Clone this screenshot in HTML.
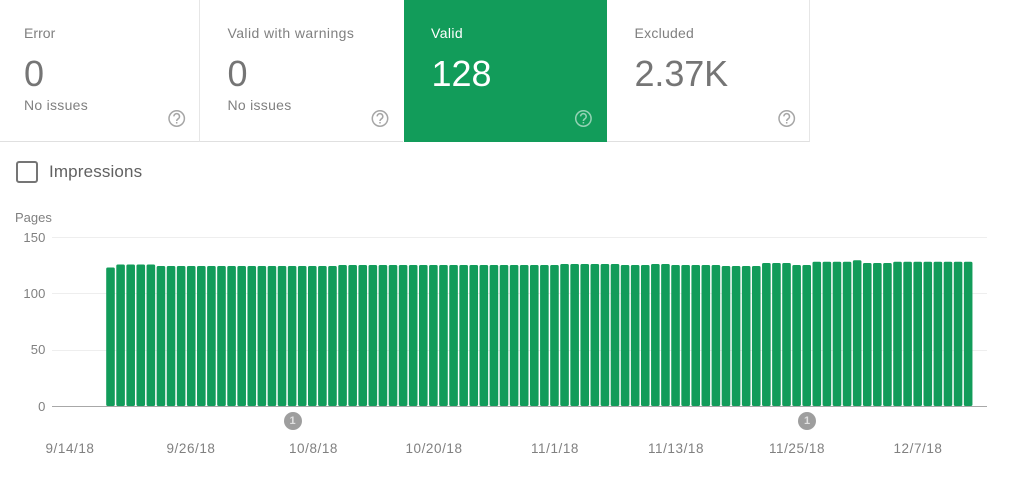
<!DOCTYPE html>
<html>
<head>
<meta charset="utf-8">
<style>
html,body{margin:0;padding:0;background:#fff}
body{width:1024px;height:482px;position:relative;overflow:hidden;font-family:"Liberation Sans",sans-serif;color:#757575}
.wrap{position:absolute;left:0;top:0;width:1024px;height:482px;filter:blur(.35px)}
.t{position:absolute;white-space:nowrap;line-height:1}
.card{position:absolute;top:0;height:141px;border-bottom:1px solid #e0e0e0;box-sizing:content-box}
.l{font-size:14px;color:#808080}
.n{font-size:36px;color:#757575}
.y{font-size:13px;color:#808080;width:30px;text-align:right;left:15.5px;letter-spacing:.15px}
.d{font-size:13.5px;color:#808080;width:80px;text-align:center;letter-spacing:.57px}
.g{position:absolute;left:52px;width:935px;height:1px;background:#eeeeee}
svg{position:absolute;overflow:visible}
.bars rect{width:8.6px;rx:1.5px;ry:1.5px;fill:#129c5a}
.bars .a{y:267.5px;height:138.5px}.bars .b{y:264.5px;height:141.5px}.bars .c{y:266px;height:140px}.bars .e{y:265px;height:141px}.bars .f{y:264px;height:142px}.bars .h{y:263px;height:143px}.bars .k{y:261.7px;height:144.3px}.bars .m{y:260.3px;height:145.7px}
</style>
</head>
<body>
<div class="wrap">
<div class="card" style="left:0;width:199px;border-right:1px solid #e6e6e6"></div>
<div class="card" style="left:200px;width:203px"></div>
<div class="card" style="left:403.5px;width:203.5px;height:142px;border:0;background:#129c5a"></div>
<div class="card" style="left:607px;width:202px;border-right:1px solid #e6e6e6"></div>

<div class="t l" style="left:24px;top:26px;letter-spacing:.05px">Error</div>
<div class="t n" style="left:24px;top:56px">0</div>
<div class="t l" style="left:24px;top:98px;letter-spacing:.28px">No issues</div>

<div class="t l" style="left:227.5px;top:26px;letter-spacing:.42px">Valid with warnings</div>
<div class="t n" style="left:227.5px;top:56px">0</div>
<div class="t l" style="left:227.5px;top:98px;letter-spacing:.28px">No issues</div>

<div class="t l" style="left:431px;top:26px;color:#fff;letter-spacing:.4px">Valid</div>
<div class="t n" style="left:431.5px;top:56px;color:#fff">128</div>

<div class="t l" style="left:634.5px;top:26px;letter-spacing:.25px">Excluded</div>
<div class="t n" style="left:634.5px;top:56px;letter-spacing:-.1px">2.37K</div>

<svg style="left:0;top:0" width="1024" height="150" fill="none" stroke-width="1.5">
<g stroke="#a6a6a6">
<circle cx="176.7" cy="118.5" r="7.7"/>
<path d="M173.9 116.4a2.8 2.8 0 1 1 4.4 2.3c-1 .7-1.6 1.1-1.6 2.3"/>
<path d="M176.7 122v1.5"/>
<circle cx="380" cy="118.5" r="7.7"/>
<path d="M377.2 116.4a2.8 2.8 0 1 1 4.4 2.3c-1 .7-1.6 1.1-1.6 2.3"/>
<path d="M380 122v1.5"/>
<circle cx="786.7" cy="118.5" r="7.7"/>
<path d="M783.9 116.4a2.8 2.8 0 1 1 4.4 2.3c-1 .7-1.6 1.1-1.6 2.3"/>
<path d="M786.7 122v1.5"/>
</g>
<g stroke="#fff" stroke-opacity=".55">
<circle cx="583.4" cy="118.5" r="7.7"/>
<path d="M580.6 116.4a2.8 2.8 0 1 1 4.4 2.3c-1 .7-1.6 1.1-1.6 2.3"/>
<path d="M583.4 122v1.5"/>
</g>
</svg>

<div style="position:absolute;left:16px;top:161px;width:18px;height:18px;border:2px solid #757575;border-radius:3px"></div>
<div class="t" style="left:49px;top:163px;font-size:17px;letter-spacing:.15px;color:#616161">Impressions</div>

<div class="t" style="left:15px;top:211px;font-size:13px;color:#808080">Pages</div>
<div class="t y" style="top:230.5px">150</div>
<div class="t y" style="top:286.5px">100</div>
<div class="t y" style="top:343px">50</div>
<div class="t y" style="top:399.5px">0</div>

<div class="g" style="top:237px"></div>
<div class="g" style="top:293px"></div>
<div class="g" style="top:349.5px"></div>

<svg class="bars" style="left:0;top:0" width="1024" height="482">
<rect class="a" x="106.2"/><rect class="b" x="116.29"/><rect class="b" x="126.38"/><rect class="b" x="136.47"/><rect class="b" x="146.56"/><rect class="c" x="156.65"/><rect class="c" x="166.74"/><rect class="c" x="176.83"/><rect class="c" x="186.92"/><rect class="c" x="197.01"/><rect class="c" x="207.1"/><rect class="c" x="217.19"/><rect class="c" x="227.28"/><rect class="c" x="237.37"/><rect class="c" x="247.46"/><rect class="c" x="257.55"/><rect class="c" x="267.64"/><rect class="c" x="277.73"/><rect class="c" x="287.82"/><rect class="c" x="297.91"/><rect class="c" x="308"/><rect class="c" x="318.09"/><rect class="c" x="328.18"/><rect class="e" x="338.27"/><rect class="e" x="348.36"/><rect class="e" x="358.45"/><rect class="e" x="368.54"/><rect class="e" x="378.63"/><rect class="e" x="388.72"/><rect class="e" x="398.81"/><rect class="e" x="408.9"/><rect class="e" x="418.99"/><rect class="e" x="429.08"/><rect class="e" x="439.17"/><rect class="e" x="449.26"/><rect class="e" x="459.35"/><rect class="e" x="469.44"/><rect class="e" x="479.53"/><rect class="e" x="489.62"/><rect class="e" x="499.71"/><rect class="e" x="509.8"/><rect class="e" x="519.89"/><rect class="e" x="529.98"/><rect class="e" x="540.07"/><rect class="e" x="550.16"/><rect class="f" x="560.25"/><rect class="f" x="570.34"/><rect class="f" x="580.43"/><rect class="f" x="590.52"/><rect class="f" x="600.61"/><rect class="f" x="610.7"/><rect class="e" x="620.79"/><rect class="e" x="630.88"/><rect class="e" x="640.97"/><rect class="f" x="651.06"/><rect class="f" x="661.15"/><rect class="e" x="671.24"/><rect class="e" x="681.33"/><rect class="e" x="691.42"/><rect class="e" x="701.51"/><rect class="e" x="711.6"/><rect class="c" x="721.69"/><rect class="c" x="731.78"/><rect class="c" x="741.87"/><rect class="c" x="751.96"/><rect class="h" x="762.05"/><rect class="h" x="772.14"/><rect class="h" x="782.23"/><rect class="e" x="792.32"/><rect class="e" x="802.41"/><rect class="k" x="812.5"/><rect class="k" x="822.59"/><rect class="k" x="832.68"/><rect class="k" x="842.77"/><rect class="m" x="852.86"/><rect class="h" x="862.95"/><rect class="h" x="873.04"/><rect class="h" x="883.13"/><rect class="k" x="893.22"/><rect class="k" x="903.31"/><rect class="k" x="913.4"/><rect class="k" x="923.49"/><rect class="k" x="933.58"/><rect class="k" x="943.67"/><rect class="k" x="953.76"/><rect class="k" x="963.85"/>
</svg>

<div style="position:absolute;left:52px;top:406px;width:935px;height:1px;background:#a8a8a8"></div>

<div style="position:absolute;left:283.5px;top:412px;width:18px;height:18px;border-radius:50%;background:#9e9e9e"></div>
<div class="t" style="left:283.5px;width:18px;text-align:center;top:416px;font-size:11px;font-weight:bold;color:#e0e0e0">1</div>
<div style="position:absolute;left:798px;top:412px;width:18px;height:18px;border-radius:50%;background:#9e9e9e"></div>
<div class="t" style="left:798px;width:18px;text-align:center;top:416px;font-size:11px;font-weight:bold;color:#e0e0e0">1</div>

<div class="t d" style="left:30px;top:442px">9/14/18</div>
<div class="t d" style="left:151px;top:442px">9/26/18</div>
<div class="t d" style="left:273.5px;top:442px">10/8/18</div>
<div class="t d" style="left:394px;top:442px">10/20/18</div>
<div class="t d" style="left:515px;top:442px">11/1/18</div>
<div class="t d" style="left:636px;top:442px">11/13/18</div>
<div class="t d" style="left:757px;top:442px">11/25/18</div>
<div class="t d" style="left:878px;top:442px">12/7/18</div>
</div>
</body>
</html>
